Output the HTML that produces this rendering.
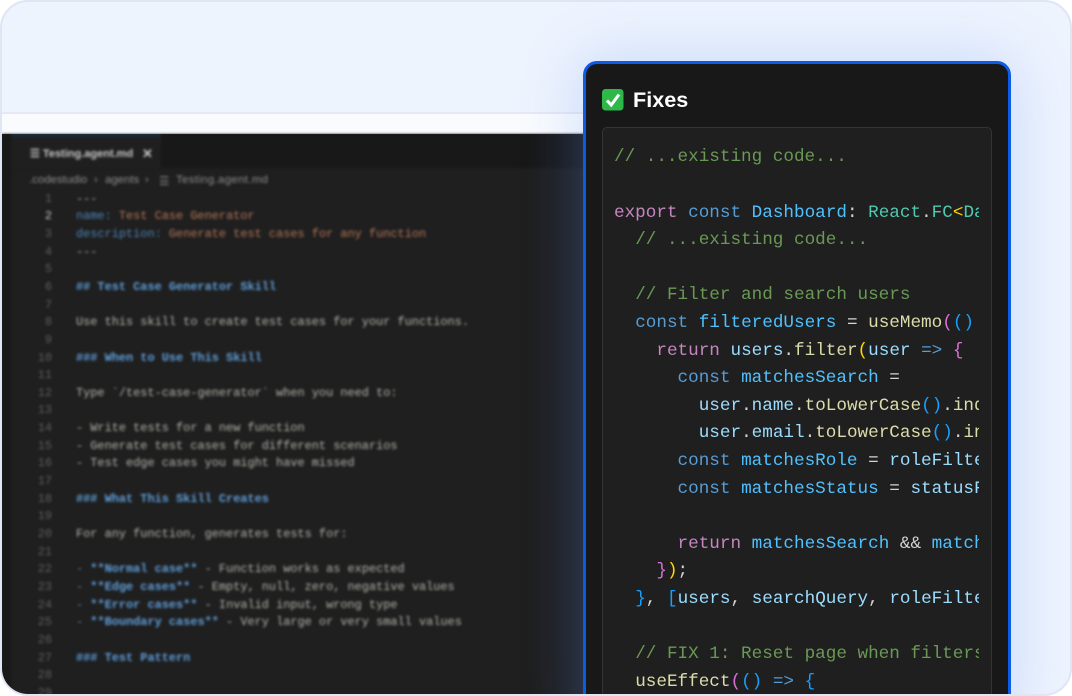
<!DOCTYPE html>
<html><head><meta charset="utf-8">
<style>
html,body{margin:0;padding:0;background:#fff;width:1072px;height:696px;overflow:hidden}
#card{position:absolute;left:0;top:0;width:1072px;height:696px;box-sizing:border-box;border:2px solid #dfe5f3;border-radius:28px;overflow:hidden;background:#eef4fe}
#lower{position:absolute;left:0;top:110px;width:600px;box-sizing:border-box;height:22px;background:#f9fbfe;border-top:2px solid #e4e9f4}
#editor{position:absolute;left:0;top:132px;width:600px;height:570px;background:#1f1f1f}
#ed-in{position:absolute;left:0;top:0;width:600px;height:570px;filter:blur(1.35px);font-family:"Liberation Mono",monospace;font-size:11.92px;color:#b5b5ad}
#side{position:absolute;left:0;top:0;width:9px;height:570px;background:#181818}
#tabbar{position:absolute;left:9px;top:0;width:600px;height:34px;background:#181818}
#tab{position:absolute;left:9px;top:0;width:150px;height:34px;background:#1f1f1f;border-top:2px solid #17314f;box-sizing:border-box;font:bold 11px "Liberation Sans",sans-serif;color:#c8c8c8}
.ln{position:absolute;width:50px;left:0;text-align:right;color:#5b5f60}
.t{position:absolute;left:74px;white-space:pre}
.b{color:#5f9fdb;font-weight:bold}.k{color:#4f86ba}.o{color:#b9775a}.g{color:#a9a9a2}
#crumb span{position:absolute;top:40px;font:11.4px "Liberation Sans",sans-serif;color:#8d8d8d;white-space:pre}
#fade{position:absolute;left:530px;top:0;width:55px;height:570px;background:linear-gradient(to right,rgba(60,70,90,0),rgba(60,70,90,.1) 50%,rgba(60,70,90,.35))}
#panel{position:absolute;left:581px;top:59px;width:428px;height:660px;box-sizing:border-box;background:#181818;border:3px solid #0d5ce8;border-radius:14px;box-shadow:0 0 60px 6px rgba(50,110,235,.18)}
#title{position:absolute;left:47px;top:23px;font:bold 21.6px "Liberation Sans",sans-serif;color:#fff;line-height:26px}
#box{position:absolute;left:16px;top:63px;width:390px;height:600px;box-sizing:border-box;background:#1f1f1f;border:1px solid #343434;border-radius:5px}
#code{position:absolute;left:11px;top:0;width:365px;height:600px;overflow:hidden;font-family:"Liberation Mono",monospace;font-size:17.65px;line-height:27.6px;color:#9cdcfe;white-space:pre;padding-top:16.4px;box-sizing:border-box;filter:blur(.3px)}
.c{color:#6a9955}.p{color:#c586c0}.s{color:#569cd6}.v{color:#4fc1ff}.n{color:#4ec9b0}.y{color:#ffd700}.f{color:#dcdcaa}.w{color:#d4d4d4}.l{color:#9cdcfe}.m{color:#da70d6}.h{color:#179fff}
</style></head>
<body>
<div id="card">
<div id="lower"></div>
<div id="editor">
<div id="ed-in">
<div id="side"></div>
<div id="tabbar"></div>
<div id="tab"><span style="position:absolute;left:19px;top:11px">☰ Testing.agent.md</span><span style="position:absolute;left:131px;top:10px;font-size:13px">✕</span></div>
<div id="crumb"><span style="left:27px">.codestudio</span><span style="left:92px">›</span><span style="left:103px">agents</span><span style="left:143px">›</span><span style="left:157px">☰</span><span style="left:174px;letter-spacing:.35px">Testing.agent.md</span></div>
<div class="ln" style="top:57.6px">1</div><div class="t g" style="top:57.6px">---</div>
<div class="ln" style="top:75.2px;color:#c4c4c4">2</div><div class="t" style="top:75.2px"><span class="k">name:</span> <span class="o">Test Case Generator</span></div>
<div class="ln" style="top:92.9px">3</div><div class="t" style="top:92.9px"><span class="k">description:</span> <span class="o">Generate test cases for any function</span></div>
<div class="ln" style="top:110.6px">4</div><div class="t g" style="top:110.6px">---</div>
<div class="ln" style="top:128.2px">5</div>
<div class="ln" style="top:145.9px">6</div><div class="t b" style="top:145.9px">## Test Case Generator Skill</div>
<div class="ln" style="top:163.5px">7</div>
<div class="ln" style="top:181.2px">8</div><div class="t" style="top:181.2px">Use this skill to create test cases for your functions.</div>
<div class="ln" style="top:198.8px">9</div>
<div class="ln" style="top:216.5px">10</div><div class="t b" style="top:216.5px">### When to Use This Skill</div>
<div class="ln" style="top:234.1px">11</div>
<div class="ln" style="top:251.8px">12</div><div class="t" style="top:251.8px">Type `/test-case-generator` when you need to:</div>
<div class="ln" style="top:269.4px">13</div>
<div class="ln" style="top:287.1px">14</div><div class="t" style="top:287.1px">- Write tests for a new function</div>
<div class="ln" style="top:304.7px">15</div><div class="t" style="top:304.7px">- Generate test cases for different scenarios</div>
<div class="ln" style="top:322.4px">16</div><div class="t" style="top:322.4px">- Test edge cases you might have missed</div>
<div class="ln" style="top:340px">17</div>
<div class="ln" style="top:357.7px">18</div><div class="t b" style="top:357.7px">### What This Skill Creates</div>
<div class="ln" style="top:375.3px">19</div>
<div class="ln" style="top:393px">20</div><div class="t" style="top:393px">For any function, generates tests for:</div>
<div class="ln" style="top:410.6px">21</div>
<div class="ln" style="top:428.3px">22</div><div class="t" style="top:428.3px"><span class="k">- </span><span class="b">**Normal case**</span> - Function works as expected</div>
<div class="ln" style="top:445.9px">23</div><div class="t" style="top:445.9px"><span class="k">- </span><span class="b">**Edge cases**</span> - Empty, null, zero, negative values</div>
<div class="ln" style="top:463.6px">24</div><div class="t" style="top:463.6px"><span class="k">- </span><span class="b">**Error cases**</span> - Invalid input, wrong type</div>
<div class="ln" style="top:481.2px">25</div><div class="t" style="top:481.2px"><span class="k">- </span><span class="b">**Boundary cases**</span> - Very large or very small values</div>
<div class="ln" style="top:498.9px">26</div>
<div class="ln" style="top:516.5px">27</div><div class="t b" style="top:516.5px">### Test Pattern</div>
<div class="ln" style="top:534.2px">28</div>
<div class="ln" style="top:551.8px">29</div>
</div>
<div id="fade"></div>
</div>
<div id="panel">
<svg style="position:absolute;left:16px;top:25px" width="22" height="22" viewBox="0 0 22 22"><rect width="21.5" height="21.5" rx="3.5" fill="#2fb84a"/><path d="M5 11.5 L9.2 16 L17 5.5" fill="none" stroke="#fff" stroke-width="3"/></svg>
<div id="title">Fixes</div>
<div id="box"><div id="code"><span class="c">// ...existing code...</span>

<span class="p">export</span> <span class="s">const</span> <span class="v">Dashboard</span><span class="w">:</span> <span class="n">React</span><span class="w">.</span><span class="n">FC</span><span class="y">&lt;</span><span class="n">Dashboard</span>
  <span class="c">// ...existing code...</span>

  <span class="c">// Filter and search users</span>
  <span class="s">const</span> <span class="v">filteredUsers</span> <span class="w">=</span> <span class="f">useMemo</span><span class="m">(</span><span class="h">()</span> <span class="s">=&gt;</span>
    <span class="p">return</span> <span class="l">users</span><span class="w">.</span><span class="f">filter</span><span class="y">(</span><span class="l">user</span> <span class="s">=&gt;</span> <span class="m">{</span>
      <span class="s">const</span> <span class="v">matchesSearch</span> <span class="w">=</span>
        <span class="l">user</span><span class="w">.</span><span class="l">name</span><span class="w">.</span><span class="f">toLowerCase</span><span class="h">()</span><span class="w">.</span><span class="f">indexOf</span>
        <span class="l">user</span><span class="w">.</span><span class="l">email</span><span class="w">.</span><span class="f">toLowerCase</span><span class="h">()</span><span class="w">.</span><span class="f">includes</span>
      <span class="s">const</span> <span class="v">matchesRole</span> <span class="w">=</span> <span class="l">roleFilter</span>
      <span class="s">const</span> <span class="v">matchesStatus</span> <span class="w">=</span> <span class="l">statusFilter</span>

      <span class="p">return</span> <span class="v">matchesSearch</span> <span class="w">&amp;&amp;</span> <span class="v">matchesRole</span>
    <span class="m">}</span><span class="y">)</span><span class="w">;</span>
  <span class="h">}</span><span class="w">,</span> <span class="h">[</span><span class="l">users</span><span class="w">,</span> <span class="l">searchQuery</span><span class="w">,</span> <span class="l">roleFilter</span>

  <span class="c">// FIX 1: Reset page when filters change</span>
  <span class="f">useEffect</span><span class="m">(</span><span class="h">()</span> <span class="s">=&gt;</span> <span class="h">{</span></div></div>
</div>
</div>
</body></html>
